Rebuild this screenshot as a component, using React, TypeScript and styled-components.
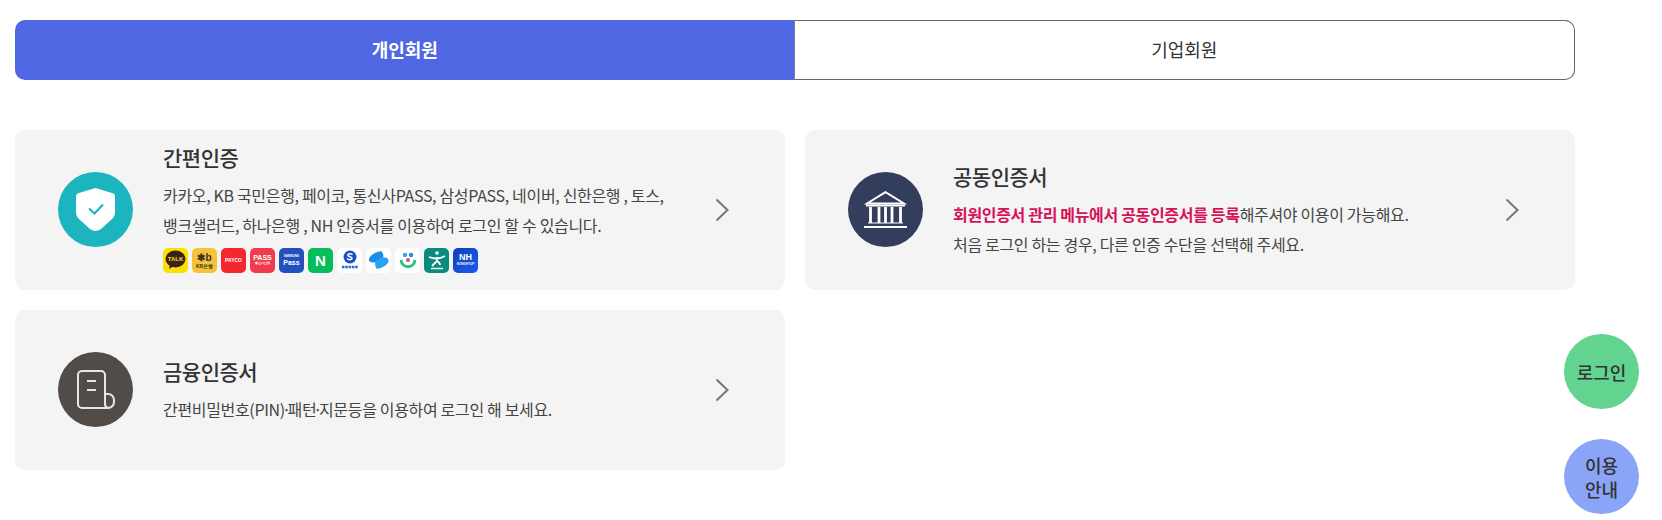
import React from 'react'
import styled, { createGlobalStyle } from 'styled-components'

const GlobalStyle = createGlobalStyle`
  html, body {
    margin: 0;
    padding: 0;
    background: #fff;
    font-family: "Noto Sans CJK KR", "Noto Sans", sans-serif;
    color: #333;
  }
`

const Page = styled.main`
  position: relative;
  width: 1662px;
  height: 520px;
  overflow: hidden;
  padding: 20px 0 0 15px;
  box-sizing: border-box;
`

const Tabs = styled.div`
  display: flex;
  width: 1560px;
  height: 60px;
  margin-bottom: 50px;
`

const Tab = styled.div<{ $active?: boolean }>`
  flex: 1;
  display: flex;
  align-items: center;
  justify-content: center;
  box-sizing: border-box;
  padding-bottom: 2px;
  font-size: 18px;
  letter-spacing: 0;
  font-weight: ${(p) => (p.$active ? 700 : 400)};
  color: ${(p) => (p.$active ? '#fff' : '#333')};
  background: ${(p) => (p.$active ? '#4f67e3' : '#fff')};
  border: ${(p) => (p.$active ? '0' : '1px solid #666')};
  border-left: 0;
  border-radius: ${(p) => (p.$active ? '10px 0 0 10px' : '0 10px 10px 0')};
  box-shadow: ${(p) => (p.$active ? 'none' : '-1px 0 0 #7a7f99')};
`

const Grid = styled.div`
  display: grid;
  grid-template-columns: 770px 770px;
  grid-auto-rows: 160px;
  gap: 20px;
`

const Card = styled.section`
  display: flex;
  align-items: center;
  box-sizing: border-box;
  padding: 0 43px;
  background: #f4f4f4;
  border-radius: 10px;
`

const Badge = styled.div<{ $bg: string }>`
  flex: none;
  width: 75px;
  height: 75px;
  border-radius: 50%;
  background: ${(p) => p.$bg};
  display: flex;
  align-items: center;
  justify-content: center;
  margin: 0 30px 1px 0;
`

const Body = styled.div`
  flex: 1;
  min-width: 0;
`

const Title = styled.h3`
  margin: 0 0 9px;
  font-size: 21px;
  line-height: 28px;
  font-weight: 500;
  letter-spacing: -0.5px;
  color: #333;
`

const Desc = styled.p`
  margin: 0;
  font-size: 16px;
  line-height: 30px;
  letter-spacing: -0.33px;
  color: #444;
`

const Strong = styled.strong`
  font-weight: 700;
  color: #d6115a;
`

const Dot = styled.span`
  margin: 0 -3px;
`

const Brands = styled.div`
  display: flex;
  gap: 4px;
  margin: 8px 0 5px;
`

const Brand = styled.div<{ $bg: string; $fg?: string; $size?: number }>`
  width: 25px;
  height: 25px;
  border-radius: 5px;
  background: ${(p) => p.$bg};
  color: ${(p) => p.$fg ?? '#fff'};
  font-family: "Liberation Sans", sans-serif;
  font-size: ${(p) => p.$size ?? 6}px;
  font-weight: 700;
  line-height: 1;
  display: flex;
  flex-direction: column;
  align-items: center;
  justify-content: center;
  overflow: hidden;
  white-space: nowrap;
`

const BrandLine = styled.span<{ $size: number }>`
  font-size: ${(p) => p.$size}px;
  margin: 1px 0;
`

const Arrow = styled.svg`
  flex: none;
  width: 14px;
  height: 24px;
  margin: 0 13px 0 17px;
`

const FloatStack = styled.div`
  position: absolute;
  left: 1564px;
  top: 334px;
  display: flex;
  flex-direction: column;
  gap: 30px;
`

const FloatButton = styled.div<{ $bg: string }>`
  width: 75px;
  height: 75px;
  border-radius: 50%;
  background: ${(p) => p.$bg};
  display: flex;
  align-items: center;
  justify-content: center;
  text-align: center;
  font-size: 18px;
  line-height: 24px;
  font-weight: 500;
  color: #333;
`

const ChevronRight = () => (
  <Arrow viewBox="0 0 14 24" fill="none">
    <path d="M1.5 1.5 12.5 12 1.5 22.5" stroke="#777" strokeWidth="2" />
  </Arrow>
)

const ShieldIcon = () => (
  <svg width="39" height="43" viewBox="0 0 39 43">
    <path
      d="M19.5 0 36 5c2 .6 3 1.800 3 3.500V24c0 3-1 5-3 7L25 41c-3.500 2.600-7.500 2.600-11 0L3 31c-2-2-3-4-3-7V8.500C0 6.800 1 5.600 3 5z"
      fill="#fff"
    />
    <path d="M13 20.500l5.500 5 8.500-9" fill="none" stroke="#1cb4bf" strokeWidth="2.200" />
  </svg>
)

const BankIcon = () => (
  <svg width="43" height="37" viewBox="0 0 43 37" fill="none" stroke="#fff" strokeWidth="2">
    <path d="M21.500 1.200 3 12.500h37z" />
    <path d="M2 14.500h39" />
    <path d="M6.500 16v16M15 16v16M21.500 16v16M28 16v16M36.500 16v16" strokeWidth="2.800" />
    <path d="M4 32h35" strokeWidth="1" />
    <path d="M0 36h43" />
  </svg>
)

const DocIcon = () => (
  <svg width="38" height="39" viewBox="0 0 38 39" fill="none" stroke="#e9e6e3" strokeWidth="2">
    <path d="M28 24V5a4 4 0 0 0-4-4H5a4 4 0 0 0-4 4v29a4 4 0 0 0 4 4h27" />
    <path d="M28 24h3a6 6 0 0 1 6 6v2a6 6 0 0 1-6 6 4.500 4.500 0 0 1-3-4.500z" />
    <path d="M10 11h9M10 20h9" strokeWidth="2.200" />
  </svg>
)

const TalkMark = () => (
  <svg width="21" height="20" viewBox="0 0 21 20">
    <ellipse cx="10.500" cy="9" rx="10" ry="8.500" fill="#3c1e1e" />
    <path d="M5 15l-1 4 5-3z" fill="#3c1e1e" />
    <text x="10.500" y="11" fontSize="6" fontWeight="700" fill="#f9e000" textAnchor="middle" fontFamily="Liberation Sans">
      TALK
    </text>
  </svg>
)

const ShinhanMark = () => (
  <svg width="22" height="22" viewBox="0 0 22 22">
    <circle cx="11" cy="8" r="6.500" fill="#1c4fc4" />
    <path d="M13.500 5.500c-2-1.500-5-.8-4.500 1 .4 1.500 4.500 1 4 3-.5 1.500-3.500 1.500-5 0" fill="none" stroke="#fff" strokeWidth="1.500" />
    <path d="M3 18h16" stroke="#2b64d8" strokeWidth="2.500" strokeDasharray="2.500 .8" />
  </svg>
)

const TossMark = () => (
  <svg width="21" height="20" viewBox="0 0 21 20">
    <path d="M13 1C8 2 2 5 1 9c-.5 2 1 3.500 4 3.500h5l5-4c1-3 0-6-2-7.500z" fill="#1b8fe6" />
    <path d="M9 19c5-1 11-4 11.500-8 .3-2-1-3.500-4-3.500h-3l-6 4c-1 3 0 6 1.500 7.500z" fill="#2aa2f2" />
  </svg>
)

const BankSaladMark = () => (
  <svg width="20" height="20" viewBox="0 0 20 20">
    <circle cx="7" cy="5" r="2.200" fill="#2fa8e0" />
    <circle cx="13" cy="5" r="2.200" fill="#3c7fd8" />
    <circle cx="10" cy="10" r="2" fill="#e24a6b" />
    <path d="M3 10c1 9 13 9 14 0" fill="none" stroke="#21c08b" strokeWidth="2.800" />
  </svg>
)

const HanaMark = () => (
  <svg width="18" height="20" viewBox="0 0 18 20" fill="none" stroke="#fff">
    <circle cx="9" cy="3" r="1.800" fill="#fff" stroke="none" />
    <path d="M1 7c5 2 11 2 16-1M9 7v4M9 11l-5 5M9 11c2 1 3 2 3 4" strokeWidth="1.800" />
    <path d="M3 18.500h12" strokeWidth="1.500" />
  </svg>
)

export default function App() {
  return (
    <Page>
      <GlobalStyle />
      <Tabs>
        <Tab $active>개인회원</Tab>
        <Tab>기업회원</Tab>
      </Tabs>

      <Grid>
        <Card>
          <Badge $bg="#1cb4bf">
            <ShieldIcon />
          </Badge>
          <Body>
            <Title>간편인증</Title>
            <Desc>
              카카오, KB 국민은행, 페이코, 통신사PASS, 삼성PASS, 네이버, 신한은행 , 토스,
              <br />
              뱅크샐러드, 하나은행 , NH 인증서를 이용하여 로그인 할 수 있습니다.
            </Desc>
            <Brands>
              <Brand $bg="#fae100">
                <TalkMark />
              </Brand>
              <Brand $bg="#f5c33b" $fg="#3a3120" $size={5}>
                <BrandLine $size={10}>✱b</BrandLine>
                KB은행
              </Brand>
              <Brand $bg="#f4262e" $size={5}>PAYCO</Brand>
              <Brand $bg="#f03a4e" $size={7}>
                PASS
                <BrandLine $size={3}>통신사인증</BrandLine>
              </Brand>
              <Brand $bg="#2350bd" $size={7}>
                <BrandLine $size={3}>SAMSUNG</BrandLine>
                Pass
              </Brand>
              <Brand $bg="#06bd5c" $size={15}>N</Brand>
              <Brand $bg="#fff">
                <ShinhanMark />
              </Brand>
              <Brand $bg="#fff">
                <TossMark />
              </Brand>
              <Brand $bg="#fff">
                <BankSaladMark />
              </Brand>
              <Brand $bg="#0b8a80">
                <HanaMark />
              </Brand>
              <Brand $bg="linear-gradient(135deg, #0f3fb8, #1a5cf0)" $size={9}>
                NH
                <BrandLine $size={3}>NONGHYUP</BrandLine>
              </Brand>
            </Brands>
          </Body>
          <ChevronRight />
        </Card>

        <Card>
          <Badge $bg="#333d5c">
            <BankIcon />
          </Badge>
          <Body>
            <Title>공동인증서</Title>
            <Desc>
              <Strong>회원인증서 관리 메뉴에서 공동인증서를 등록</Strong>해주셔야 이용이 가능해요.
              <br />
              처음 로그인 하는 경우, 다른 인증 수단을 선택해 주세요.
            </Desc>
          </Body>
          <ChevronRight />
        </Card>

        <Card>
          <Badge $bg="#524c49">
            <DocIcon />
          </Badge>
          <Body>
            <Title>금융인증서</Title>
            <Desc>
              간편비밀번호(PIN)<Dot>·</Dot>패턴<Dot>·</Dot>지문등을 이용하여 로그인 해 보세요.
            </Desc>
          </Body>
          <ChevronRight />
        </Card>
      </Grid>

      <FloatStack>
        <FloatButton $bg="#62d490">로그인</FloatButton>
        <FloatButton $bg="#8aa4f8">
          이용
          <br />
          안내
        </FloatButton>
      </FloatStack>
    </Page>
  )
}
